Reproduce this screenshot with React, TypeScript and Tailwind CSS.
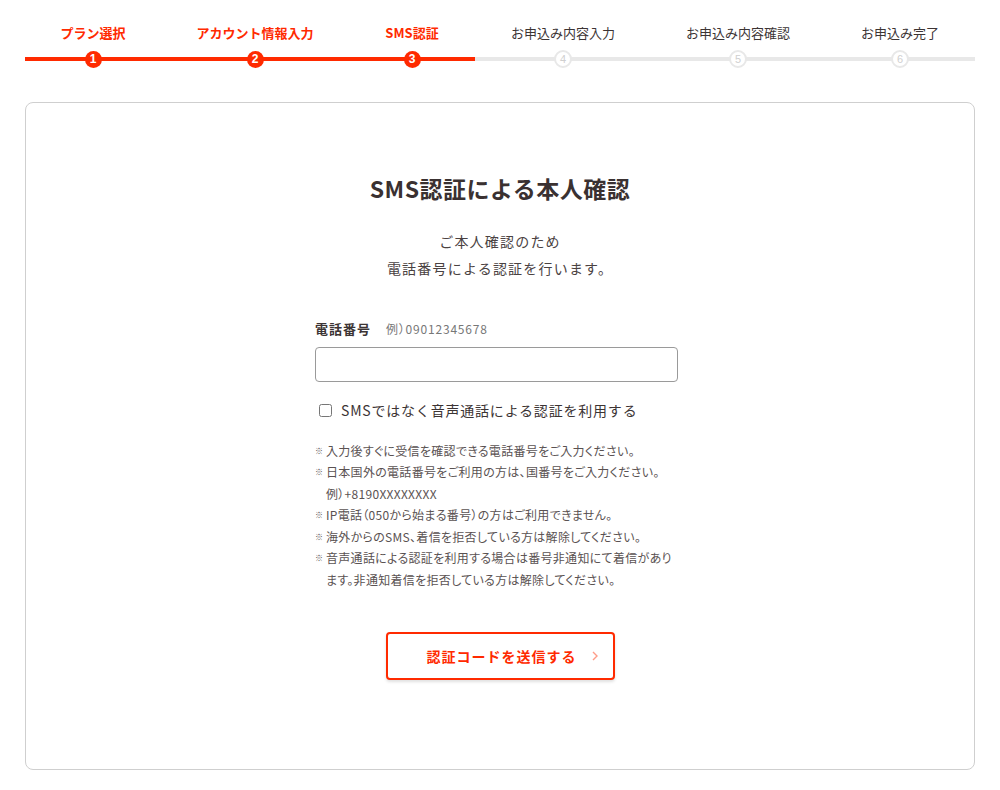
import type { FC } from 'react'

const steps = [
	{ label: 'プラン選択', done: true },
	{ label: 'アカウント情報入力', done: true },
	{ label: 'SMS認証', done: true },
	{ label: 'お申込み内容入力', done: false },
	{ label: 'お申込み内容確認', done: false },
	{ label: 'お申込み完了', done: false }
]

const notes = [
	['入力後すぐに受信を確認できる電話番号をご入力ください。'],
	['日本国外の電話番号をご利用の方は、国番号をご入力ください。', '例）+8190XXXXXXXX'],
	['IP電話（050から始まる番号）の方はご利用できません。'],
	['海外からのSMS、着信を拒否している方は解除してください。'],
	['音声通話による認証を利用する場合は番号非通知にて着信があり', 'ます。非通知着信を拒否している方は解除してください。']
]

const Steps: FC = () => (
	<div className="grid grid-cols-[136px_188px_126px_176px_174px_150px] mx-[25px] pt-[24px]">
		{steps.map((step, i) => (
			<div key={step.label} className="flex flex-col items-center">
				<div
					className={
						step.done
							? 'text-[13px] leading-[18px] font-bold text-[#ff2a00] whitespace-nowrap'
							: 'text-[13px] leading-[18px] text-[#3c3434] whitespace-nowrap'
					}
				>
					{step.label}
				</div>
				<div className="relative w-full h-[16px] mt-[9px] flex items-center justify-center">
					<div
						className={
							step.done
								? 'absolute left-0 right-0 top-[6px] h-[4px] bg-[#ff2a00]'
								: 'absolute left-0 right-0 top-[6px] h-[4px] bg-[#e8e8e8]'
						}
					/>
					{step.done ? (
						<div className="relative w-[17px] h-[17px] rounded-full bg-[#ff2a00] text-white text-[12px] font-bold flex items-center justify-center leading-none font-['Liberation_Sans',sans-serif]">
							{i + 1}
						</div>
					) : (
						<div className="relative w-[18px] h-[18px] rounded-full bg-white border-2 border-[#e8e8e8] text-[#cfcfcf] text-[11px] flex items-center justify-center leading-none font-['Liberation_Sans',sans-serif]">
							{i + 1}
						</div>
					)}
				</div>
			</div>
		))}
	</div>
)

const App: FC = () => {
	return (
		<div className="w-[1000px] h-[790px] bg-white font-['Noto_Sans_CJK_JP','Noto_Sans',sans-serif] text-[#3c3434]">
			<Steps />

			{/* card */}
			<div className="mx-[25px] mt-[35px] h-[668px] border border-[#cfcfcf] rounded-[8px] flex flex-col items-center pt-[69px]">
				<h1 className="text-[23px] font-bold leading-[32px] tracking-[0.5px] text-[#3a3131]">
					SMS認証による本人確認
				</h1>
				<p className="mt-[24px] text-center text-[14px] leading-[27px] text-[#4a4242] tracking-[1.2px]">
					ご本人確認のため
					<br />
					電話番号による認証を行います。
				</p>

				<div className="w-[363px] mt-[37px] mr-[7px]">
					<div className="flex items-baseline gap-[15px]">
						<span className="text-[13px] font-bold tracking-[1px]">電話番号</span>
						<span className="text-[12px] text-[#777] tracking-[0.8px] [font-feature-settings:'palt']">
							例）09012345678
						</span>
					</div>
					<input
						type="text"
						className="mt-[8px] w-full h-[35px] border border-[#9a9a9a] rounded-[4px] px-2 outline-none"
					/>
					<label className="flex items-center mt-[18px] ml-[4px] gap-[9px]">
						<input type="checkbox" className="w-[13px] h-[13px] m-0" />
						<span className="text-[14px] tracking-[0.8px] text-[#3c3434]">
							SMSではなく音声通話による認証を利用する
						</span>
					</label>

					<ul className="mt-[19px] text-[12px] leading-[21.5px] text-[#5a5252] tracking-[0.3px] whitespace-nowrap [font-feature-settings:'palt']">
						{notes.map(lines => (
							<li key={lines[0]} className="flex">
								<span className="w-[11px] shrink-0 text-[8px]">※</span>
								<span>
									{lines.map(line => (
										<span key={line} className="block">
											{line}
										</span>
									))}
								</span>
							</li>
						))}
					</ul>
				</div>

				<button className="mt-[42px] w-[229px] h-[48px] border-2 border-[#ff2a00] rounded-[4px] bg-white shadow-[0_2px_3px_rgba(0,0,0,0.12)] flex items-center relative">
					<span className="flex-1 text-center text-[14px] font-bold text-[#ff2a00] tracking-[1px] pl-[3px]">
						認証コードを送信する
					</span>
					<svg
						className="absolute right-[15px] top-1/2 -translate-y-1/2"
						width="6"
						height="10"
						viewBox="0 0 6 10"
						fill="none"
					>
						<path d="M1 1l4 4-4 4" stroke="#ff9c88" strokeWidth="1.4" />
					</svg>
				</button>
			</div>
		</div>
	)
}

export default App
